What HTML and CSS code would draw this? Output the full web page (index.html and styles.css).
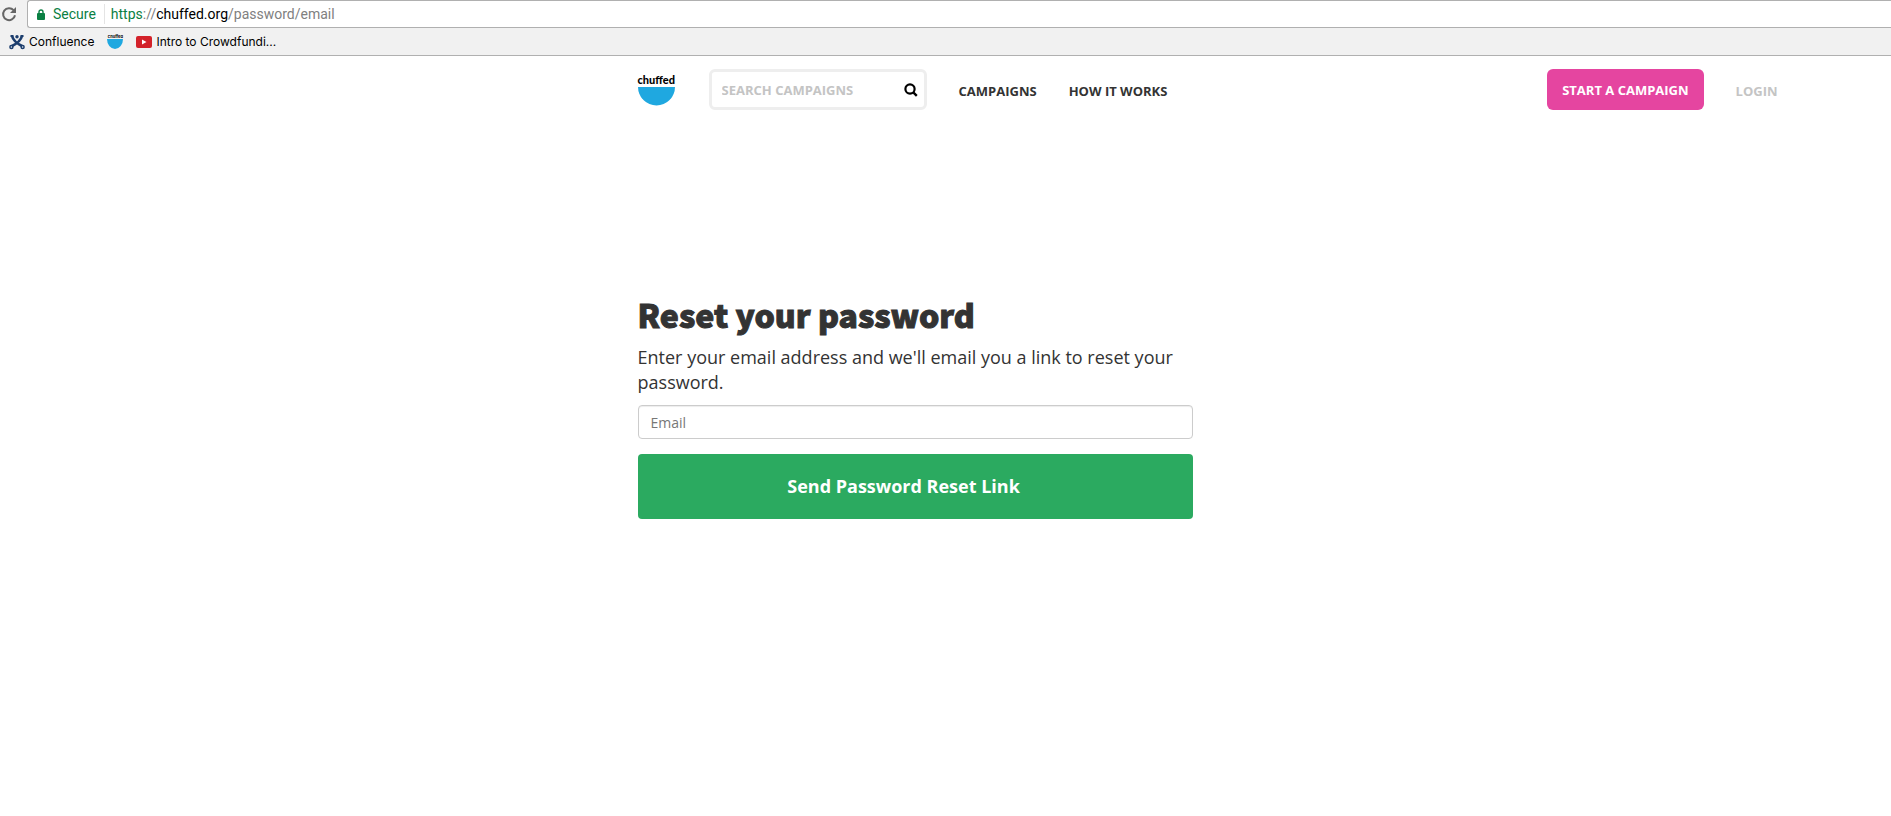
FILE: index.html
```html
<!DOCTYPE html>
<html lang="en">
<head>
    <meta charset="UTF-8">
    <title>Reset your password</title>
    <link rel="stylesheet" href="styles.css">
</head>
<body>
<div class="browser">
    <div class="toolbar">
        <button class="reload" type="button" aria-label="Reload">
            <svg width="16" height="16" viewBox="0 0 16 16">
                <path d="M12.6 4.2A6 6 0 1 0 14 9.3" fill="none" stroke="#666" stroke-width="2"/>
                <path d="M15 1v6H9z" fill="#666"/>
            </svg>
        </button>
        <div class="address">
            <svg width="8" height="11" viewBox="0 0 8 11">
                <path d="M2 5V3a2 2 0 0 1 4 0v2" fill="none" stroke="#0b8043" stroke-width="1.4"/>
                <rect y="4" width="8" height="7" rx="1" fill="#0b8043"/>
            </svg>
            <span class="secure">Secure</span>
            <span class="url"><span class="scheme">https</span>://<span class="host">chuffed.org</span>/password/email</span>
        </div>
    </div>
    <div class="bookmarks">
        <a href="#">
            <svg width="16" height="16" viewBox="0 0 16 16">
                <g fill="none" stroke="#1d3e6e">
                    <path d="M3 2c1 4 6 8 10 10M13 2c-1 4-6 8-10 10" stroke-width="2.6"/>
                    <path d="M1.500 2h3M11.500 2h3" stroke-width="2"/>
                    <circle cx="2.400" cy="13" r="1.500" stroke-width="1.500"/>
                    <circle cx="13.600" cy="13" r="1.500" stroke-width="1.500"/>
                </g>
                <circle cx="8" cy="2.800" r="1.700" fill="#1d3e6e"/>
            </svg>
            Confluence
        </a>
        <a class="bookmark-chuffed" href="#">
            <span>chuffed</span>
            <svg width="16" height="10" viewBox="0 0 16 10">
                <path d="M0 0h16a8 10 0 0 1-16 0z" fill="#1fa8e0"/>
            </svg>
        </a>
        <a href="#">
            <svg width="16" height="12" viewBox="0 0 16 12">
                <rect width="16" height="12" rx="2" fill="#d3222a"/>
                <path d="M6 3.500v5L10.500 6z" fill="#fff"/>
            </svg>
            Intro to Crowdfundi...
        </a>
    </div>
</div>

<div class="container">
    <header class="header">
        <a class="logo" href="#">
            <span>chuffed</span>
            <svg width="37" height="19" viewBox="0 0 37 19">
                <path d="M0 0h37a18.500 18.500 0 0 1-37 0z" fill="#1fa8e0"/>
            </svg>
        </a>
        <form class="search">
            <input type="text" placeholder="SEARCH CAMPAIGNS" aria-label="Search campaigns">
            <button type="button" aria-label="Search">
                <svg width="14" height="14" viewBox="0 0 14 14">
                    <circle cx="6" cy="6" r="4.600" fill="none" stroke="#000" stroke-width="2.200"/>
                    <path d="M9.300 9.300l3.500 3.500" stroke="#000" stroke-width="2.400"/>
                </svg>
            </button>
        </form>
        <nav class="nav">
            <a href="#">CAMPAIGNS</a>
            <a href="#">HOW IT WORKS</a>
        </nav>
        <a class="start" href="#">START A CAMPAIGN</a>
        <a class="login" href="#">LOGIN</a>
    </header>

    <main class="reset">
        <h1>Reset your password</h1>
        <p>Enter your email address and we'll email you a link to reset your password.</p>
        <form>
            <input type="email" placeholder="Email" aria-label="Email">
            <button type="submit">Send Password Reset Link</button>
        </form>
    </main>
</div>
</body>
</html>
```
FILE: styles.css
```css
* {
    box-sizing: border-box;
}
body {
    margin: 0;
    background: #fff;
    color: #333;
    font-family: "Open Sans", "Noto Sans", sans-serif;
}
a {
    color: inherit;
    text-decoration: none;
}
svg {
    display: block;
    flex: none;
}
input, button {
    font-family: inherit;
    margin: 0;
}

/* browser bars */
.browser {
    background: #f1f1f1;
    border-bottom: 1px solid #b0b0b0;
    color: #000;
    font-family: Roboto, "Liberation Sans", sans-serif;
}
.toolbar {
    display: flex;
    height: 28px;
}
.reload {
    width: 27px;
    padding: 0 0 0 1px;
    border: 0;
    background: none;
}
.address {
    flex: 1;
    display: flex;
    align-items: center;
    padding-left: 9px;
    border: 1px solid #b0b0b0;
    border-right: 0;
    border-radius: 3px 0 0 3px;
    background: #fff;
    font-size: 14px;
}
.secure {
    margin-left: 8px;
    padding-right: 8px;
    border-right: 1px solid #e4e4e4;
    line-height: 20px;
}
.secure, .scheme {
    color: #0b8043;
}
.url {
    margin-left: 6px;
    color: #808080;
}
.host {
    color: #000;
}
.bookmarks {
    display: flex;
    gap: 13px;
    height: 27px;
    padding-left: 9px;
    font-family: Inter, "Liberation Sans", sans-serif;
    font-size: 12px;
}
.bookmarks a {
    display: flex;
    align-items: center;
    gap: 4px;
}
.bookmarks .bookmark-chuffed {
    flex-direction: column;
    justify-content: center;
    gap: 0;
    width: 16px;
    font-size: 4px;
    font-weight: 700;
    line-height: 5px;
}

/* page */
.container {
    max-width: 1140px;
    margin: 0 6% 0 auto;
}
.header {
    display: flex;
    align-items: center;
    padding-top: 13px;
    font-size: 13px;
    font-weight: 700;
}
.logo {
    width: 37px;
    margin-right: 34px;
    color: #000;
    font-family: Lato, sans-serif;
    font-size: 11px;
    font-weight: 900;
    line-height: 12px;
}
.logo span {
    display: block;
    margin-bottom: 1px;
}
.search {
    display: flex;
    align-items: center;
    width: 218px;
    height: 41px;
    border: 3px solid #eee;
    border-radius: 6px;
}
.search input {
    flex: 1;
    min-width: 0;
    padding: 0 0 0 10px;
    border: 0;
    outline: 0;
    font-size: 13px;
    font-weight: 700;
}
.search input::placeholder {
    color: #c4c4c4;
}
.search button {
    padding: 0 6px;
    border: 0;
    background: none;
}
.nav {
    display: flex;
    gap: 32px;
    margin-left: 32px;
    padding-top: 2px;
}
.start {
    margin-left: auto;
    padding: 1px 15px 0;
    border-radius: 6px;
    background: #e545a0;
    color: #fff;
    line-height: 40px;
}
.login {
    margin-left: 32px;
    padding-top: 2px;
    color: #c4c4c4;
}
.reset {
    max-width: 555px;
    margin-top: 180px;
}
.reset h1 {
    margin: 0;
    font-family: "Noto Sans CJK JP", "Open Sans", sans-serif;
    font-size: 32px;
    font-weight: 900;
    line-height: 48px;
    -webkit-text-stroke: 1px #333;
}
.reset p {
    margin: 7px 0 10px;
    font-size: 18px;
    line-height: 25px;
}
.reset input {
    display: block;
    width: 100%;
    height: 34px;
    padding: 0 12px;
    border: 1px solid #ccc;
    border-radius: 4px;
    box-shadow: inset 0 1px 1px rgba(0, 0, 0, .075);
    font-size: 14px;
}
.reset input::placeholder {
    color: #777;
}
.reset button {
    display: block;
    width: 100%;
    height: 65px;
    margin-top: 15px;
    padding: 0 23px 2px 0;
    border: 0;
    border-radius: 4px;
    background: #2baa60;
    color: #fff;
    font-size: 18px;
    font-weight: 700;
}
```
